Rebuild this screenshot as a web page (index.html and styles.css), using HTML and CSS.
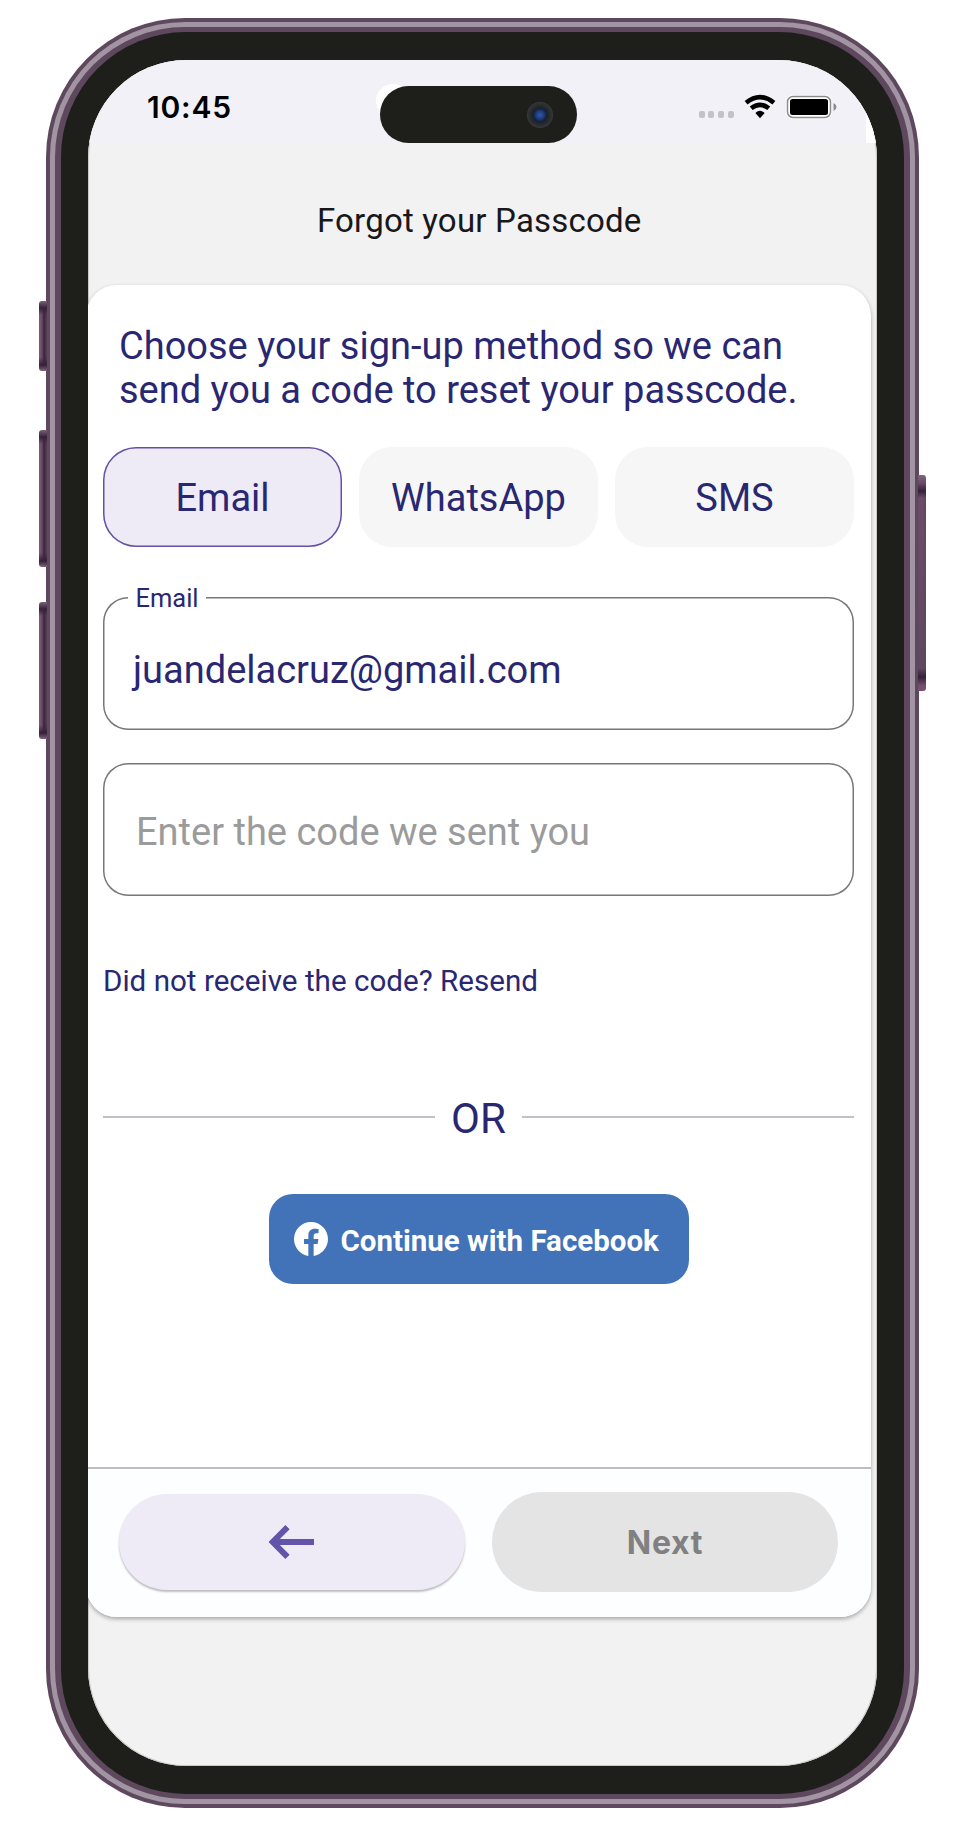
FILE: index.html
```html
<!DOCTYPE html>
<html lang="en">
<head>
<meta charset="utf-8">
<title>Forgot your Passcode</title>
<link rel="stylesheet" href="styles.css">
</head>
<body>
<div class="phone">
  <i class="key key-silent"></i><i class="key key-up"></i><i class="key key-down"></i><i class="key key-power"></i>
  <div class="ring-light"><div class="ring-inner"><div class="bezel"><div class="screen">
    <i class="corner-notch"></i>
    <header class="status">
      <span class="time">10:45</span>
      <div class="status-icons">
        <span class="dots"><i></i><i></i><i></i><i></i></span>
        <svg class="wifi" viewBox="0 0 32 25"><path d="M16 24.2 20.6 19Q16 14.6 11.4 19Z"/><path class="arc" d="M7.2 14.3Q16 7.3 24.8 14.3M2.1 8.8Q16 -2.6 29.9 8.8"/></svg>
        <svg class="battery" viewBox="0 0 52 25"><rect class="bhalo" x="1.5" y="1.5" width="43" height="21" rx="5.5"/><rect class="bshell" x="1.5" y="1.5" width="43" height="21" rx="5.5"/><rect x="4" y="4" width="38" height="16" rx="2.5"/><path class="bcap" d="M47.5 8v8q3-1.3 3-4t-3-4z"/></svg>
      </div>
      <i class="island-glow"></i>
      <div class="island"><i class="camera"></i></div>
    </header>
    <h1 class="title">Forgot your Passcode</h1>
    <main class="card">
      <p class="intro">Choose your sign-up method so we can<br>send you a code to reset your passcode.</p>
      <nav class="tabs">
        <button class="tab tab-active">Email</button>
        <button class="tab">WhatsApp</button>
        <button class="tab">SMS</button>
      </nav>
      <div class="field field-email"><span class="label">Email</span><span class="value">juandelacruz@gmail.com</span></div>
      <div class="field field-code"><span class="placeholder">Enter the code we sent you</span></div>
      <p class="resend">Did not receive the code? Resend</p>
      <div class="or"><span>OR</span></div>
      <button class="facebook">
        <svg viewBox="0 0 24 24"><path d="M24 12.07C24 5.4 18.63 0 12 0S0 5.4 0 12.07C0 18.1 4.39 23.09 10.13 24v-8.44H7.08v-3.49h3.05V9.41c0-3.02 1.79-4.69 4.53-4.69 1.31 0 2.68.24 2.68.24v2.97h-1.51c-1.49 0-1.96.93-1.96 1.89v2.25h3.33l-.53 3.49h-2.8V24C19.61 23.09 24 18.1 24 12.07z"/></svg>
        <span>Continue with Facebook</span>
      </button>
      <footer class="actions">
        <button class="back" aria-label="Back"><svg viewBox="0 0 46 34"><path d="M45 17H5M18.5 2.2 3.8 17l14.7 14.8"/></svg></button>
        <button class="next">Next</button>
      </footer>
    </main>
  </div></div></div></div>
</div>
</body>
</html>
```
FILE: styles.css
```css
* { box-sizing: border-box; }
body { margin: 0; padding: 18px 0 0 46px; height: 1825px; overflow: hidden; background: #fff; font-family: Roboto, sans-serif; color: #2a2772; }
p, h1 { margin: 0; font-weight: 400; }
button { border: 0; margin: 0; padding: 0; font: inherit; color: inherit; }

/* Device frame */
.phone { position: relative; width: 872.5px; height: 1790px; padding: 4px; border-radius: 139px; background: #5d485d; }
.ring-light { height: 100%; padding: 5px; border-radius: 135px; background: #a294a2; }
.ring-inner { height: 100%; padding: 5px 6px; border-radius: 130px; background: #5d485d; }
.bezel { height: 100%; padding: 28px 27px; border-radius: 125px; background: #1e1e1b; }
.screen { position: relative; height: 100%; overflow: hidden; border-radius: 98px; background: #f2f2f2; box-shadow: inset 0 0 0 1px #c9c9c7; }
.key { position: absolute; left: -7px; width: 8px; border-radius: 3px 0 0 3px; background: linear-gradient(#7a6277 0, #35213a 7px, transparent 14px, transparent calc(100% - 14px), #35213a calc(100% - 6px), #80647c), linear-gradient(90deg, #7a5c76 0, #6a4865 3px, #3a263b 5px, #59405a); }
.key-silent { top: 283px; height: 70px; }
.key-up { top: 412px; height: 137px; }
.key-down { top: 584px; height: 137px; }
.key-power { left: 872px; top: 457px; height: 216px; width: 8px; border-radius: 0 3px 3px 0; background: linear-gradient(#80647c 0, #6b4a68 8px, #35213a 16px, transparent 23px, transparent calc(100% - 23px), #35213a calc(100% - 14px), #77506f calc(100% - 5px)), linear-gradient(#7060 0, #59485acc), linear-gradient(90deg, #6d4a68 0, #704c6a 5px, #59485a); }

/* Status bar */
.status { position: relative; display: flex; justify-content: space-between; height: 83px; padding: 27px 39px 0 59px; background: #f2f1f7; }
.corner-notch { position: absolute; z-index: 1; right: 0; top: 50px; width: 11px; height: 33px; background: #fff; }
.time { font: 600 30px/40px Inter, sans-serif; letter-spacing: .8px; color: #000; }
.status-icons { display: flex; height: 40px; }
.dots { display: flex; gap: 3.6px; margin: 24px 10px 0 0; }
.dots i { width: 6px; height: 7px; border-radius: 2px; background: #c3c2c7; }
.wifi { width: 32px; height: 25px; margin: 7px 10px 0 0; }
.wifi .arc { fill: none; stroke: #000; stroke-width: 4.6; }
.battery { width: 52px; height: 25px; margin-top: 8px; }
.bhalo { fill: #fff; stroke: #fff; stroke-width: 3; }
.bshell { fill: none; stroke: #8b8b8e; stroke-width: 1.5; }
.bcap { fill: #8b8b8e; }
.island-glow { position: absolute; left: 288px; top: 24px; width: 34px; height: 34px; border-radius: 50%; background: #fff; }
.island { position: absolute; left: 292px; top: 26px; width: 197px; height: 57px; border-radius: 29px; background: #1e1e1b; }
.camera { position: absolute; left: 147px; top: 16px; width: 26px; height: 26px; border-radius: 50%; background: radial-gradient(circle, #2d5ca8 0, #1d3d7c 4px, #15264f 6px, #1c2229 7px, #303336 12px, #3b3c3d 13px); }
.title { height: 142px; padding: 58px 6px 0 0; text-align: center; font-size: 33px; line-height: 40px; letter-spacing: .2px; color: #18181b; }

/* Card */
.card { display: flex; flex-direction: column; width: 785px; height: 1332px; margin-left: -2px; padding: 39px 17px 0; border-radius: 31px; background: #fff; box-shadow: 0 2px 4px rgba(0,0,0,.32); overflow: hidden; }
.intro { padding-left: 16px; font-size: 38px; line-height: 44px; white-space: nowrap; }
.tabs { display: grid; grid-template-columns: repeat(3, 239px); gap: 17px; margin-top: 35px; }
.tab { height: 100px; padding-top: 2px; border-radius: 33px; background: #f6f6f6; font-size: 38px; }
.tab-active { background: #efebf6; box-shadow: inset 0 0 0 1.5px #6650a4; }
.field { position: relative; display: flex; align-items: center; flex: none; width: 751px; height: 133px; border-radius: 25px; box-shadow: inset 0 0 0 1.5px #777; font-size: 38px; }
.field-email { margin-top: 50px; padding: 12px 0 0 30px; }
.field-code { margin-top: 33px; padding: 5px 0 0 33px; }
.label { position: absolute; left: 25px; top: -14px; width: 78px; background: #fff; text-align: center; font-size: 25.5px; line-height: 30px; }
.placeholder { color: #9b9b9b; }
.resend { margin-top: 65px; font-size: 29.6px; line-height: 40px; }
.or { display: flex; align-items: center; gap: 16px; margin-top: 93px; height: 50px; font-size: 42px; line-height: 50px; }
.or::before, .or::after { content: ""; flex: 1; height: 2px; margin-top: -4px; background: #c1c0c6; }
.facebook { display: flex; align-items: center; flex: none; width: 420px; height: 90px; margin: 50px 0 0 165.5px; padding: 3px 0 0 25px; border-radius: 24px; background: #4272b8; color: #fff; font-size: 29.5px; font-weight: 700; white-space: nowrap; }
.facebook svg { width: 34px; height: 34px; margin: -3px 13px 0 0; fill: #fff; }
.actions { display: flex; align-items: flex-start; flex: none; margin: auto -17px 0; height: 150px; padding: 23px 33px; border-top: 2px solid #bebdc1; background: #fdfeff; }
.back { width: 346px; height: 96px; margin: 2px 27px 0 0; border-radius: 48px; background: #efebf6; box-shadow: 0 2px 2px rgba(0,0,0,.25); display: grid; place-items: center; }
.back svg { width: 46px; height: 34px; fill: none; stroke: #6254aa; stroke-width: 6; }
.next { width: 346px; height: 100px; border-radius: 50px; background: #e4e4e5; font: 700 32px Inter, sans-serif; letter-spacing: .7px; color: #808080; }
```
